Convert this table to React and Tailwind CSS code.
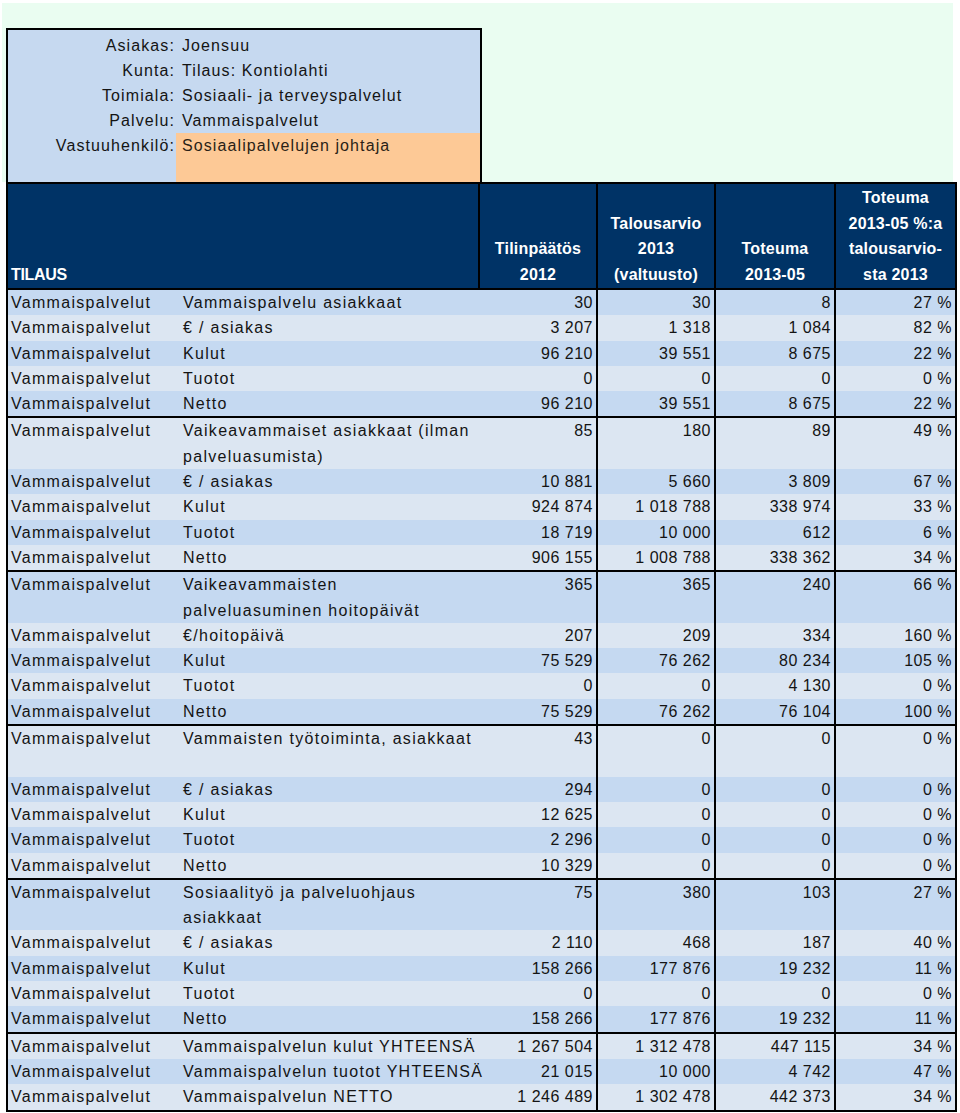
import React from "react";

const blocks = [
  [
    ["Vammaispalvelu asiakkaat", "30", "30", "8", "27 %"],
    ["€ / asiakas", "3 207", "1 318", "1 084", "82 %"],
    ["Kulut", "96 210", "39 551", "8 675", "22 %"],
    ["Tuotot", "0", "0", "0", "0 %"],
    ["Netto", "96 210", "39 551", "8 675", "22 %"],
  ],
  [
    [["Vaikeavammaiset asiakkaat (ilman", "palveluasumista)"], "85", "180", "89", "49 %"],
    ["€ / asiakas", "10 881", "5 660", "3 809", "67 %"],
    ["Kulut", "924 874", "1 018 788", "338 974", "33 %"],
    ["Tuotot", "18 719", "10 000", "612", "6 %"],
    ["Netto", "906 155", "1 008 788", "338 362", "34 %"],
  ],
  [
    [["Vaikeavammaisten", "palveluasuminen hoitopäivät"], "365", "365", "240", "66 %"],
    ["€/hoitopäivä", "207", "209", "334", "160 %"],
    ["Kulut", "75 529", "76 262", "80 234", "105 %"],
    ["Tuotot", "0", "0", "4 130", "0 %"],
    ["Netto", "75 529", "76 262", "76 104", "100 %"],
  ],
  [
    [["Vammaisten työtoiminta, asiakkaat", ""], "43", "0", "0", "0 %"],
    ["€ / asiakas", "294", "0", "0", "0 %"],
    ["Kulut", "12 625", "0", "0", "0 %"],
    ["Tuotot", "2 296", "0", "0", "0 %"],
    ["Netto", "10 329", "0", "0", "0 %"],
  ],
  [
    [["Sosiaalityö ja palveluohjaus", "asiakkaat"], "75", "380", "103", "27 %"],
    ["€ / asiakas", "2 110", "468", "187", "40 %"],
    ["Kulut", "158 266", "177 876", "19 232", "11 %"],
    ["Tuotot", "0", "0", "0", "0 %"],
    ["Netto", "158 266", "177 876", "19 232", "11 %"],
  ],
  [
    ["Vammaispalvelun kulut YHTEENSÄ", "1 267 504", "1 312 478", "447 115", "34 %"],
    ["Vammaispalvelun tuotot YHTEENSÄ", "21 015", "10 000", "4 742", "47 %"],
    ["Vammaispalvelun NETTO", "1 246 489", "1 302 478", "442 373", "34 %"],
  ],
];

const info = [
  ["Asiakas:", "Joensuu"],
  ["Kunta:", "Tilaus: Kontiolahti"],
  ["Toimiala:", "Sosiaali- ja terveyspalvelut"],
  ["Palvelu:", "Vammaispalvelut"],
];

const numWidths = ["w-[118px] border-r-2", "w-[118px] border-r-2", "w-[120px] border-r-2", "w-[119px]"];

const DataRow = ({ row, index, first }) => {
  const [label, ...nums] = row;
  const twoLine = Array.isArray(label);
  const bg = index % 2 === 0 ? "bg-[#c5d9f1]" : "bg-[#dce6f2]";
  return (
    <div
      className={`flex ${bg} ${twoLine ? "h-[50.6px]" : "h-[25.3px]"} ${
        first ? "border-t-2 border-black box-content" : ""
      }`}
    >
      <div className="w-[168px] pl-[3px] tracking-[1.3px] whitespace-nowrap">Vammaispalvelut</div>
      <div className="w-[304px] pl-[7px] tracking-[1.3px] whitespace-nowrap">
        {twoLine ? (
          <>
            {label[0]}
            <br />
            {label[1]}
          </>
        ) : (
          label
        )}
      </div>
      {nums.map((n, i) => (
        <div key={i} className={`${numWidths[i]} border-black text-right pr-[3px] tracking-[0.5px]`}>
          {n}
        </div>
      ))}
    </div>
  );
};

export default function App() {
  let idx = 0;
  return (
    <div className="w-[960px] min-h-[1113px] bg-white text-[16px] leading-[25.3px] text-[#141414] font-['Liberation_Sans',Arial,sans-serif]">
      <div className="ml-[2px] pt-[25px] pl-[4px] w-[951px] bg-[#eafdf1] mt-[3px]">
        <div className="w-[476px] h-[154px] border-t-2 border-x-2 border-black bg-[#c6d9f0] pt-[3px] tracking-[1.1px] leading-[25px]">
          {info.map(([k, v]) => (
            <div key={k} className="flex h-[25px]">
              <div className="w-[168px] text-right pr-[1px]">{k}</div>
              <div className="pl-[6px] whitespace-nowrap">{v}</div>
            </div>
          ))}
          <div className="flex h-[49px]">
            <div className="w-[168px] text-right pr-[1px]">Vastuuhenkilö:</div>
            <div className="flex-1 bg-[#fdc996] pl-[6px] text-[#2a1f16] whitespace-nowrap">
              Sosiaalipalvelujen johtaja
            </div>
          </div>
        </div>
      </div>

      <div className="ml-[6px] w-[951px] border-x-2 border-b-2 border-black">
        <div className="flex h-[108px] bg-[#003366] border-y-2 border-black text-white font-bold leading-[25.5px] tracking-[0.2px]">
          <div className="w-[472px] flex flex-col justify-end pb-[1px] pl-[3px] border-r-2 border-black tracking-[-0.3px]">
            TILAUS
          </div>
          <div className="w-[118px] flex flex-col justify-end items-center pb-[1px] border-r-2 border-black">
            <div>Tilinpäätös</div>
            <div>2012</div>
          </div>
          <div className="w-[118px] flex flex-col justify-end items-center pb-[1px] border-r-2 border-black">
            <div>Talousarvio</div>
            <div>2013</div>
            <div>(valtuusto)</div>
          </div>
          <div className="w-[120px] flex flex-col justify-end items-center pb-[1px] border-r-2 border-black">
            <div>Toteuma</div>
            <div>2013-05</div>
          </div>
          <div className="w-[119px] flex flex-col justify-end items-center pb-[1px] whitespace-nowrap">
            <div>Toteuma</div>
            <div>2013-05 %:a</div>
            <div>talousarvio-</div>
            <div>sta 2013</div>
          </div>
        </div>

        {blocks.map((block, b) => (
          <div key={b}>
            {block.map((row, r) => {
              const i = idx++;
              return <DataRow key={r} row={row} index={i} first={b > 0 && r === 0} />;
            })}
          </div>
        ))}
      </div>
    </div>
  );
}
